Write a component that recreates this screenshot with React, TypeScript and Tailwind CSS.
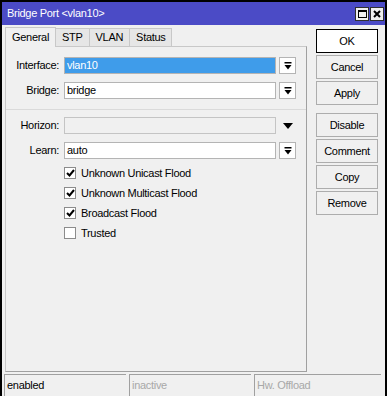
import React from 'react';

const DropBtn = () => (
  <div className="ml-[3px] w-[17px] h-[17px] bg-white border border-[#b4b4b4] flex items-center justify-center">
    <svg width="8" height="8" viewBox="0 0 8 8">
      <rect x="0.5" y="0" width="7" height="1.5" fill="#000" />
      <polygon points="0.5,3 7.5,3 4,7.5" fill="#000" />
    </svg>
  </div>
);

const Check = ({ on, label }: { on?: boolean; label: string }) => (
  <div className="h-[20px] flex items-center pl-[58px]">
    <div className="w-[12px] h-[12px] bg-white border border-[#8c8c8c] flex items-center justify-center">
      {on && (
        <svg width="9" height="8" viewBox="0 0 9 8">
          <path d="M1 4 L3.5 6.5 L8 1" stroke="#000" strokeWidth="2" fill="none" />
        </svg>
      )}
    </div>
    <span className="ml-[5px]">{label}</span>
  </div>
);

const Btn = ({ children, def, className = '' }: { children: React.ReactNode; def?: boolean; className?: string }) => (
  <div
    className={`h-[24px] w-[62px] flex items-center justify-center ${def ? 'border border-black bg-white' : 'border border-[#adadad] bg-[#f0f0f0]'} ${className}`}
  >
    {children}
  </div>
);

export default function App() {
  const tabs = ['General', 'STP', 'VLAN', 'Status'];
  return (
    <div className="w-[389px] h-[396px] overflow-hidden bg-white font-['Liberation_Sans',Arial,sans-serif] text-[11px] tracking-[-0.3px] text-black">
      <div className="w-[387px] h-[396px] bg-[#f0f0f0] border-x-2 border-t-2 border-black">
        {/* title bar */}
        <div className="h-[23px] bg-[#4b4bc6] flex items-center pl-[5px] pr-[1px] text-white">
          <span>Bridge Port &lt;vlan10&gt;</span>
          <div className="ml-auto flex gap-[1px]">
            <div className="w-[14px] h-[14px] bg-[#f0f0f0] border border-[#303030] flex items-center justify-center">
              <div className="w-[9px] h-[8px] border border-black border-t-2" />
            </div>
            <div className="w-[14px] h-[14px] bg-[#f0f0f0] border border-[#303030] flex items-center justify-center">
              <svg width="8" height="8" viewBox="0 0 8 8">
                <path d="M1 1 L7 7 M7 1 L1 7" stroke="#000" strokeWidth="2" />
              </svg>
            </div>
          </div>
        </div>

        <div className="flex">
          {/* tabs + panel */}
          <div className="ml-[3px] w-[302px]">
            <div className="h-[21px] flex items-end">
              {tabs.map((t, i) =>
                i === 0 ? (
                  <div key={t} className="h-[20px] px-[6px] flex items-center bg-[#f0f0f0] border border-b-0 border-[#c8c8c8] relative top-[1px] z-10">
                    {t}
                  </div>
                ) : (
                  <div key={t} className="h-[18px] px-[6px] flex items-center bg-[#e6e6e6] border border-b-0 border-[#c8c8c8] -ml-[1px]">
                    {t}
                  </div>
                )
              )}
            </div>
            <div className="h-[326px] border border-[#c8c8c8] border-r-[#a0a0a0] border-b-[#a0a0a0] pt-[10px]">
              <div className="flex items-center h-[17px]">
                <span className="w-[53px] text-right">Interface:</span>
                <div className="ml-[5px] w-[212px] h-[17px] bg-[#3f9cea] border border-[#b4b4b4] text-white flex items-center pl-[2px]">vlan10</div>
                <DropBtn />
              </div>
              <div className="flex items-center h-[17px] mt-[8px]">
                <span className="w-[53px] text-right">Bridge:</span>
                <div className="ml-[5px] w-[212px] h-[17px] bg-white border border-[#b4b4b4] flex items-center pl-[2px]">bridge</div>
                <DropBtn />
              </div>
              <div className="mt-[10px] border-t border-[#dadada]" />
              <div className="flex items-center h-[17px] mt-[7px]">
                <span className="w-[53px] text-right">Horizon:</span>
                <div className="ml-[5px] w-[212px] h-[17px] bg-[#f0f0f0] border border-[#c4c4c4]" />
                <div className="ml-[3px] w-[17px] h-[17px] flex items-center justify-center">
                  <svg width="10" height="6" viewBox="0 0 10 6">
                    <polygon points="0,0 10,0 5,6" fill="#000" />
                  </svg>
                </div>
              </div>
              <div className="flex items-center h-[17px] mt-[8px]">
                <span className="w-[53px] text-right">Learn:</span>
                <div className="ml-[5px] w-[212px] h-[17px] bg-white border border-[#b4b4b4] flex items-center pl-[2px]">auto</div>
                <DropBtn />
              </div>
              <div className="mt-[4px]">
                <Check on label="Unknown Unicast Flood" />
                <Check on label="Unknown Multicast Flood" />
                <Check on label="Broadcast Flood" />
                <Check label="Trusted" />
              </div>
            </div>
          </div>

          {/* buttons */}
          <div className="ml-[9px] pt-[4px] flex flex-col gap-[2px]">
            <Btn def>OK</Btn>
            <Btn>Cancel</Btn>
            <Btn>Apply</Btn>
            <Btn className="mt-[6px]">Disable</Btn>
            <Btn>Comment</Btn>
            <Btn>Copy</Btn>
            <Btn>Remove</Btn>
          </div>
        </div>

        {/* status bar */}
        <div className="mt-[2px] ml-[2px] flex gap-[3px]">
          <div className="w-[122px] h-[22px] border-t border-l border-[#a0a0a0] flex items-center pl-[2px]">enabled</div>
          <div className="w-[122px] h-[22px] border-t border-l border-[#a0a0a0] flex items-center pl-[2px] text-[#a8a8a8]">inactive</div>
          <div className="w-[127px] h-[22px] border-t border-l border-[#a0a0a0] flex items-center pl-[2px] text-[#a8a8a8]">Hw. Offload</div>
        </div>
      </div>
    </div>
  );
}
